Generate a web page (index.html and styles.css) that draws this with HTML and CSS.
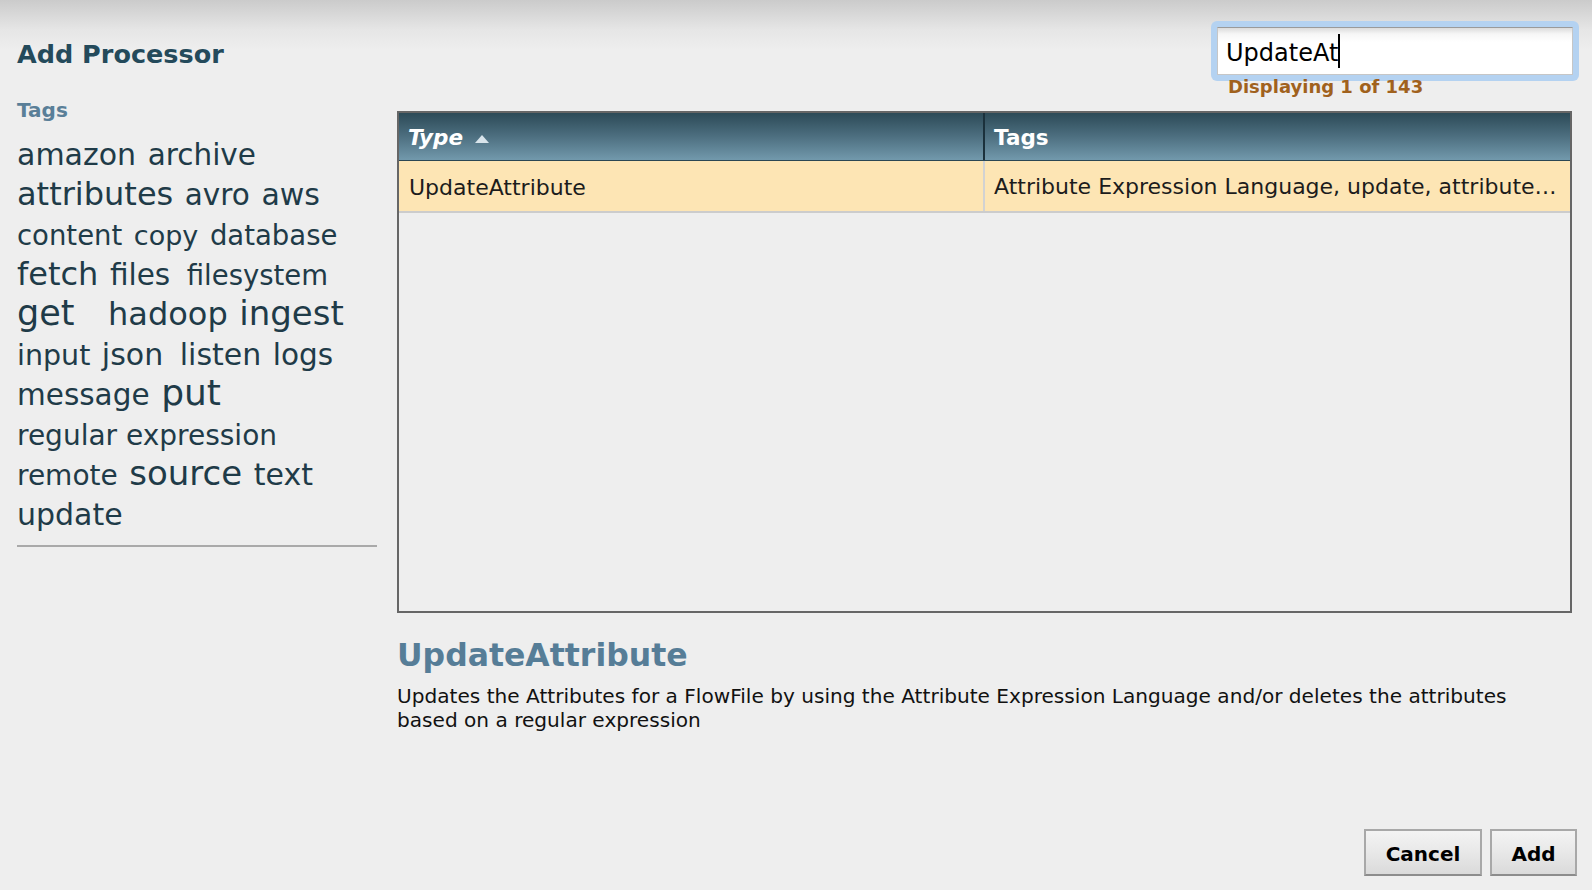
FILE: index.html
```html
<!DOCTYPE html>
<html lang="en">
<head>
<meta charset="utf-8">
<title>Add Processor</title>
<link rel="stylesheet" href="styles.css">
</head>
<body>
<div class="dialog">
  <aside class="sidebar">
    <h1 class="title">Add Processor</h1>
    <h2 class="tags-label">Tags</h2>
    <div class="tag-cloud">
      <span class="tag t30">amazon</span> <span class="tag t295">archive</span>
      <span class="tag t32">attributes</span> <span class="tag t295">avro</span> <span class="tag t30">aws</span>
      <span class="tag t275">content</span> <span class="tag t27">copy</span> <span class="tag t275">database</span>
      <span class="tag t32">fetch</span> <span class="tag t295 tag-gap">files</span> <span class="tag t275">filesystem</span>
      <span class="tag t35 tag-wide">get</span> <span class="tag t32">hadoop</span> <span class="tag t34">ingest</span>
      <span class="tag t285">input</span> <span class="tag t30 tag-gap">json</span> <span class="tag t30">listen</span> <span class="tag t295">logs</span>
      <span class="tag t295">message</span> <span class="tag t36">put</span>
      <span class="tag t28">regular expression</span>
      <span class="tag t28">remote</span> <span class="tag t34">source</span> <span class="tag t30">text</span>
      <span class="tag t30">update</span>
    </div>
    <hr class="sep">
  </aside>

  <main class="content">
    <div class="search-area">
      <div class="search-box">
        <div class="search-glow">
          <div class="search-input"><span class="search-text">UpdateAt</span><span class="caret"></span></div>
        </div>
        <div class="count">Displaying 1 of 143</div>
      </div>
    </div>

    <div class="grid">
      <div class="grid-header">
        <div class="hcell hcell-type">Type <span class="sort-arrow"></span></div>
        <div class="hcell hcell-tags">Tags</div>
      </div>
      <div class="grid-row selected">
        <div class="cell cell-type">UpdateAttribute</div>
        <div class="cell cell-tags">Attribute Expression Language, update, attributes, modification, delete, state</div>
      </div>
    </div>

    <h3 class="proc-name">UpdateAttribute</h3>
    <p class="desc">Updates the Attributes for a FlowFile by using the Attribute Expression Language and/or deletes the attributes based on a regular expression</p>

    <div class="buttons">
      <button class="btn btn-cancel">Cancel</button>
      <button class="btn btn-add">Add</button>
    </div>
  </main>
</div>
</body>
</html>
```

FILE: styles.css
```css
html, body {
  margin: 0;
  padding: 0;
}

body {
  width: 1592px;
  height: 890px;
  overflow: hidden;
  background: linear-gradient(#cbcbcb 0, #e6e6e6 30px, #eeeeee 50px, #eeeeee 100%);
  font-family: "DejaVu Sans", Verdana, sans-serif;
  color: #1a1a1a;
}

.dialog {
  display: flex;
  height: 890px;
  box-sizing: border-box;
  padding-left: 17px;
  padding-right: 15px;
}

/* ---------- sidebar ---------- */
.sidebar {
  width: 360px;
  flex: none;
}

.title {
  margin: 38px 0 0;
  font-size: 25.5px;
  line-height: 32px;
  font-weight: bold;
  color: #244a5b;
}

.tags-label {
  margin: 28px 0 0;
  font-size: 20px;
  line-height: 24px;
  font-weight: bold;
  color: #5a7f98;
}

.tag-cloud {
  margin-top: 13px;
  font-size: 30px;
  line-height: 40px;
  color: #1f3b48;
}

.tag {
  line-height: 0;
  margin-right: 2px;
  white-space: nowrap;
}

.tag-gap { margin-right: 7px; }
.tag-wide { margin-right: 24px; }

.t27  { font-size: 27px; }
.t275 { font-size: 27.5px; }
.t28  { font-size: 28px; }
.t285 { font-size: 28.5px; }
.t295 { font-size: 29.5px; }
.t30  { font-size: 30px; }
.t32  { font-size: 32px; }
.t34  { font-size: 34px; }
.t35  { font-size: 35px; }
.t36  { font-size: 36px; }

.sep {
  margin: 10px 0 0;
  border: 0;
  height: 2px;
  background: #a9a9a9;
}

/* ---------- content ---------- */
.content {
  flex: 1;
  margin-left: 20px;
  display: flex;
  flex-direction: column;
  min-width: 0;
}

.search-area {
  height: 111px;
  box-sizing: border-box;
  padding-top: 21px;
  display: flex;
  justify-content: flex-end;
  margin-right: -2px;
}

.search-box {
  width: 368px;
}

.search-glow {
  background: #b4d2f1;
  border-radius: 6px;
  padding: 6px;
}

.search-input {
  height: 48px;
  box-sizing: border-box;
  border: 1px solid #c6c6c6;
  border-top-color: #9a9a9a;
  background: linear-gradient(#dcdcdc 0, #f6f6f6 6px, #ffffff 14px);
  padding: 5px 0 0 8px;
  font-size: 24px;
  line-height: 41px;
  color: #000;
  white-space: nowrap;
}

.caret {
  display: inline-block;
  width: 2px;
  height: 34px;
  background: #000;
  vertical-align: -7px;
}

.count {
  margin-top: -4px;
  padding-left: 17px;
  font-size: 18px;
  line-height: 20px;
  font-weight: bold;
  color: #a0611d;
}

/* ---------- grid ---------- */
.grid {
  height: 502px;
  box-sizing: border-box;
  border: 2px solid #666666;
  margin-right: 5px;
  background: #eeeeee;
}

.grid-header {
  display: grid;
  grid-template-columns: 584px 1fr;
  height: 48px;
  box-sizing: border-box;
  background: linear-gradient(#2c4a57 0, #4d6f80 50%, #7299ac 100%);
  border-bottom: 1px solid #2b4753;
}

.hcell {
  display: flex;
  align-items: center;
  padding-left: 10px;
  padding-top: 2px;
  font-size: 21.5px;
  font-weight: bold;
  color: #ffffff;
}

.hcell-type {
  font-style: italic;
  padding-left: 9px;
}

.hcell-tags {
  border-left: 2px solid #1b313c;
  padding-left: 9px;
}

.sort-arrow {
  display: inline-block;
  width: 0;
  height: 0;
  margin-left: 12px;
  margin-top: 2px;
  border-left: 7px solid transparent;
  border-right: 7px solid transparent;
  border-bottom: 8px solid #d8e4eb;
}

.grid-row {
  display: grid;
  grid-template-columns: 584px 1fr;
  height: 52px;
  box-sizing: border-box;
  border-bottom: 2px solid #cccccc;
}

.grid-row.selected {
  background: #fde5b4;
}

.cell {
  display: flex;
  align-items: center;
  padding: 2px 12px 0 10px;
  font-size: 22px;
  color: #1c1c1c;
  white-space: nowrap;
  overflow: hidden;
  min-width: 0;
}

.cell-tags {
  display: block;
  line-height: 48px;
  text-overflow: ellipsis;
  border-left: 2px solid #d2d2d2;
  padding-left: 9px;
}

/* ---------- details ---------- */
.proc-name {
  margin: 23px 0 0;
  font-size: 31.5px;
  line-height: 38px;
  font-weight: bold;
  color: #567d97;
}

.desc {
  margin: 10px 0 0;
  max-width: 1150px;
  font-size: 20.1px;
  line-height: 24px;
  color: #111111;
}

/* ---------- buttons ---------- */
.buttons {
  margin-top: auto;
  margin-bottom: 14px;
  display: flex;
  justify-content: flex-end;
  gap: 8px;
}

.btn {
  height: 47px;
  box-sizing: border-box;
  border: 2px solid #a8a8a8;
  border-bottom-color: #8c8c8c;
  background: linear-gradient(#f3f3f3 0, #e8e8e8 50%, #dadada 100%);
  font-family: "DejaVu Sans", Verdana, sans-serif;
  font-size: 20px;
  font-weight: bold;
  color: #000;
  padding: 2px 0 0;
}

.btn-cancel { width: 118px; }
.btn-add { width: 87px; }
```
